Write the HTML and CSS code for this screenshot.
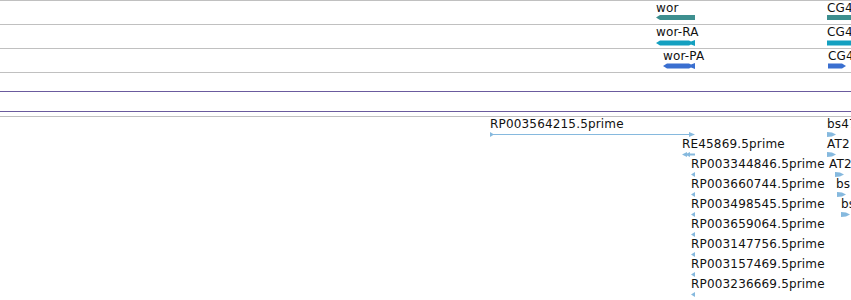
FILE: index.html
```html
<!DOCTYPE html>
<html>
<head>
<meta charset="utf-8">
<link rel="stylesheet" href="styles.css">
</head>
<body>
<div class="view">
  <div class="track">
    <span class="label" style="left:656px">wor</span>
    <svg class="bar" style="left:656px" width="39" height="5" viewBox="0 0 39 5"><polygon class="teal" points="0,2.5 4,0 39,0 39,5 4,5"/></svg>
    <span class="label" style="left:827px">CG4</span>
    <svg class="bar" style="left:827px" width="24" height="5" viewBox="0 0 24 5"><rect class="teal" x="0" y="0" width="24" height="5"/></svg>
  </div>
  <div class="track">
    <span class="label" style="left:656px">wor-RA</span>
    <svg class="bar bar2" style="left:656px" width="40" height="6" viewBox="0 0 40 6"><polygon class="cyan" points="0,3 4,0.5 33,0.5 35,1.5 39,0 39,6 35,4.5 33,5.5 4,5.5"/></svg>
    <span class="label" style="left:827px">CG4</span>
    <svg class="bar bar2" style="left:827px" width="24" height="6" viewBox="0 0 24 6"><rect class="cyan" x="0" y="0.5" width="24" height="5"/></svg>
  </div>
  <div class="track">
    <span class="label" style="left:663px">wor-PA</span>
    <svg class="bar" style="left:663px" width="33" height="6" viewBox="0 0 33 6"><polygon class="blue" points="0,3 4,0.5 26,0.5 28,1.5 32,0 32,6 28,4.5 26,5.5 4,5.5"/></svg>
    <span class="label" style="left:828px">CG4</span>
    <svg class="bar" style="left:828px" width="19" height="6" viewBox="0 0 19 6"><polygon class="blue" points="0,0.5 14,0.5 18,3 14,5.5 0,5.5"/></svg>
  </div>
  <div class="spacer"></div>
  <div class="band"></div>
  <div class="gap"></div>
  <div class="lower">
    <span class="label" style="left:490px;top:0px">RP003564215.5prime</span>
    <svg class="arrow" style="left:490px;top:15px" width="206" height="5" viewBox="0 0 206 5">
      <polygon class="lb" points="0,0 4,2.5 0,5"/>
      <rect class="lb" x="0" y="2" width="203" height="1"/>
      <polygon class="lb" points="199,0 205,2.5 199,5"/>
    </svg>

    <span class="label" style="left:682px;top:20px">RE45869.5prime</span>
    <svg class="arrow" style="left:682px;top:35px" width="14" height="5" viewBox="0 0 14 5">
      <polygon class="lb" points="0,2.5 5,0 5,1.5 8,0 8,1.5 13,1.5 13,3.5 8,3.5 8,5 5,3.5 5,5"/>
    </svg>

    <span class="label" style="left:691px;top:40px">RP003344846.5prime</span>
    <svg class="arrow" style="left:691px;top:55px" width="4" height="5" viewBox="0 0 4 5"><polygon class="lb" points="0,2.5 4,0 4,5"/></svg>
    <span class="label" style="left:691px;top:60px">RP003660744.5prime</span>
    <svg class="arrow" style="left:691px;top:75px" width="4" height="5" viewBox="0 0 4 5"><polygon class="lb" points="0,2.5 4,0 4,5"/></svg>
    <span class="label" style="left:691px;top:80px">RP003498545.5prime</span>
    <svg class="arrow" style="left:691px;top:95px" width="4" height="5" viewBox="0 0 4 5"><polygon class="lb" points="0,2.5 4,0 4,5"/></svg>
    <span class="label" style="left:691px;top:100px">RP003659064.5prime</span>
    <svg class="arrow" style="left:691px;top:115px" width="4" height="5" viewBox="0 0 4 5"><polygon class="lb" points="0,2.5 4,0 4,5"/></svg>
    <span class="label" style="left:691px;top:120px">RP003147756.5prime</span>
    <svg class="arrow" style="left:691px;top:135px" width="4" height="5" viewBox="0 0 4 5"><polygon class="lb" points="0,2.5 4,0 4,5"/></svg>
    <span class="label" style="left:691px;top:140px">RP003157469.5prime</span>
    <svg class="arrow" style="left:691px;top:155px" width="4" height="5" viewBox="0 0 4 5"><polygon class="lb" points="0,2.5 4,0 4,5"/></svg>
    <span class="label" style="left:691px;top:160px">RP003236669.5prime</span>
    <svg class="arrow" style="left:691px;top:175px" width="4" height="5" viewBox="0 0 4 5"><polygon class="lb" points="0,2.5 4,0 4,5"/></svg>

    <span class="label" style="left:827px;top:0px">bs47</span>
    <svg class="arrow" style="left:827px;top:15px" width="9" height="5" viewBox="0 0 9 5"><polygon class="lb" points="0,0 5,0.5 9,2.5 5,4.5 0,5"/></svg>
    <span class="label" style="left:827px;top:20px">AT2</span>
    <svg class="arrow" style="left:827px;top:35px" width="9" height="5" viewBox="0 0 9 5"><polygon class="lb" points="0,0 5,0.5 9,2.5 5,4.5 0,5"/></svg>
    <span class="label" style="left:829px;top:40px">AT2</span>
    <svg class="arrow" style="left:835px;top:55px" width="9" height="5" viewBox="0 0 9 5"><polygon class="lb" points="0,0 5,0.5 9,2.5 5,4.5 0,5"/></svg>
    <span class="label" style="left:836px;top:60px">bs</span>
    <svg class="arrow" style="left:837px;top:75px" width="9" height="5" viewBox="0 0 9 5"><polygon class="lb" points="0,0 5,0.5 9,2.5 5,4.5 0,5"/></svg>
    <span class="label" style="left:841px;top:80px">bs</span>
    <svg class="arrow" style="left:841px;top:95px" width="9" height="5" viewBox="0 0 9 5"><polygon class="lb" points="0,0 5,0.5 9,2.5 5,4.5 0,5"/></svg>
  </div>
</div>
</body>
</html>
```
FILE: styles.css
```css
html, body {
  margin: 0;
  padding: 0;
  background: #ffffff;
}
.view {
  width: 851px;
  height: 300px;
  overflow: hidden;
  border-top: 1px solid #c0c0c0;
  box-sizing: border-box;
  font-family: "DejaVu Sans", sans-serif;
  font-size: 12px;
  line-height: 14px;
  letter-spacing: 0.17px;
  color: #111111;
}
.track {
  position: relative;
  height: 23px;
  border-bottom: 1px solid #c0c0c0;
}
.spacer {
  height: 18px;
  border-bottom: 1px solid #6b5b9e;
}
.band {
  height: 19px;
  border-bottom: 1px solid #6b5b9e;
}
.gap {
  height: 4px;
  border-bottom: 1px solid #c0c0c0;
}
.lower {
  position: relative;
  height: 183px;
}
.label {
  position: absolute;
  top: 0;
  white-space: nowrap;
}
.bar {
  position: absolute;
  top: 14px;
  display: block;
}
.bar2 {
  top: 15px;
}
.arrow {
  position: absolute;
  display: block;
}
.teal { fill: #3d8f8f; }
.cyan { fill: #14a0c0; }
.blue { fill: #3a6fd0; }
.lb { fill: #86b9de; }
```
